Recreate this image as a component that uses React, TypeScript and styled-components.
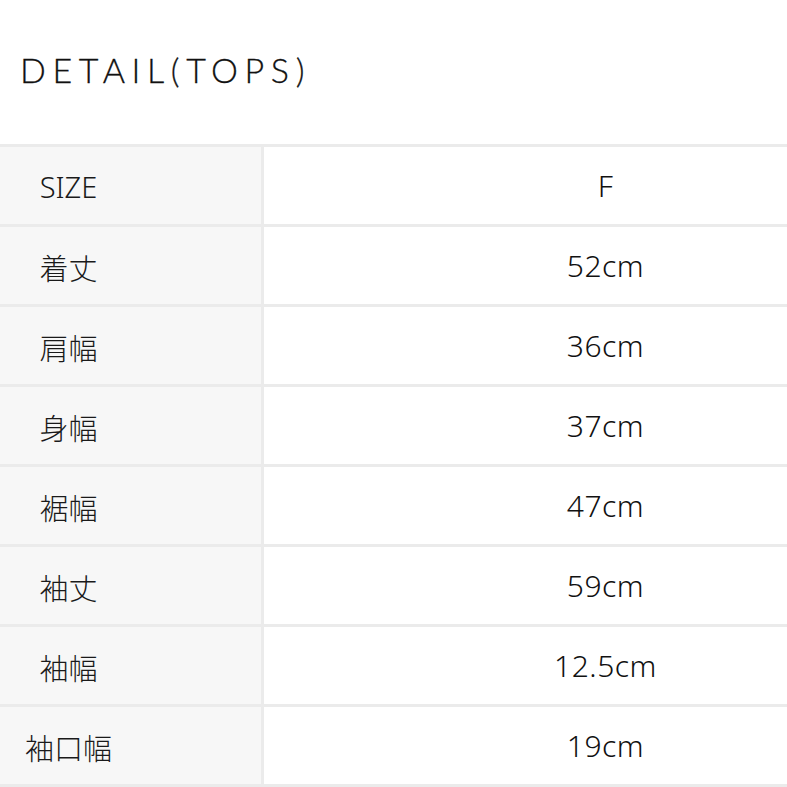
import styled, { createGlobalStyle } from "styled-components";

const Global = createGlobalStyle`
  html, body {
    margin: 0;
    padding: 0;
    background: #ffffff;
  }
  body {
    font-family: "Noto Sans", "Noto Sans CJK JP", sans-serif;
    color: #222222;
  }
`;

const Page = styled.div`
  width: 787px;
  height: 787px;
  overflow: hidden;
  display: flex;
  flex-direction: column;
`;

const Heading = styled.h2`
  margin: 0;
  height: 145px;
  padding-left: 20px;
  box-sizing: border-box;
  display: flex;
  align-items: center;
  padding-bottom: 6px;
  font-family: "Lato", "Noto Sans CJK JP", sans-serif;
  font-weight: 300;
  font-size: 34px;
  letter-spacing: 6.6px;
  color: #111111;
  -webkit-text-stroke: 0.3px #111111;
`;

const Table = styled.div`
  display: flex;
  flex-direction: column;
  border-top: 3px solid #ebebeb;
`;

const Row = styled.div`
  display: grid;
  grid-template-columns: 264px 1fr;
  height: 80px;
  border-bottom: 3px solid #ebebeb;
  box-sizing: border-box;
`;

const Label = styled.div`
  background: #f7f7f7;
  border-right: 3px solid #ebebeb;
  display: flex;
  align-items: center;
  justify-content: center;
  padding-right: 124px;
  padding-top: 2px;
  font-size: 29px;
  font-weight: 300;
  color: #1a1a1a;
  font-family: "Noto Sans", "Noto Sans CJK JP", sans-serif;
`;

const Value = styled.div`
  display: flex;
  align-items: center;
  justify-content: center;
  padding-left: 160px;
  font-size: 30px;
  font-weight: 300;
  letter-spacing: 0.5px;
  color: #111111;
  font-family: "Noto Sans", "Noto Sans CJK JP", sans-serif;
`;

const rows: [string, string][] = [
  ["SIZE", "F"],
  ["着丈", "52cm"],
  ["肩幅", "36cm"],
  ["身幅", "37cm"],
  ["裾幅", "47cm"],
  ["袖丈", "59cm"],
  ["袖幅", "12.5cm"],
  ["袖口幅", "19cm"],
];

export default function App() {
  return (
    <Page>
      <Global />
      <Heading>DETAIL(TOPS)</Heading>
      <Table>
        {rows.map(([label, value]) => (
          <Row key={label}>
            <Label>{label}</Label>
            <Value>{value}</Value>
          </Row>
        ))}
      </Table>
    </Page>
  );
}
